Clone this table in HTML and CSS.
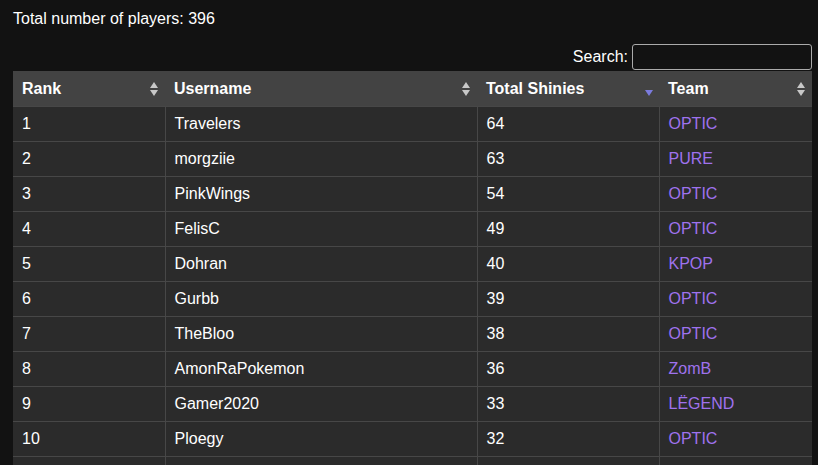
FILE: index.html
```html
<!DOCTYPE html>
<html>
<head>
<meta charset="utf-8">
<link rel="stylesheet" href="styles.css">
</head>
<body>
<div class="wrap">
  <p class="total">Total number of players: 396</p>
  <div class="filter">
    <label class="filter-label">Search:</label>
    <input class="filter-input" type="search">
  </div>
  <table class="board">
    <colgroup>
      <col class="c-rank">
      <col class="c-user">
      <col class="c-shiny">
      <col class="c-team">
    </colgroup>
    <thead>
      <tr>
        <th>Rank<span class="sort both"></span></th>
        <th>Username<span class="sort both"></span></th>
        <th>Total Shinies<span class="sort desc"></span></th>
        <th>Team<span class="sort both"></span></th>
      </tr>
    </thead>
    <tbody>
      <tr><td>1</td><td>Travelers</td><td>64</td><td class="team">OPTIC</td></tr>
      <tr><td>2</td><td>morgziie</td><td>63</td><td class="team">PURE</td></tr>
      <tr><td>3</td><td>PinkWings</td><td>54</td><td class="team">OPTIC</td></tr>
      <tr><td>4</td><td>FelisC</td><td>49</td><td class="team">OPTIC</td></tr>
      <tr><td>5</td><td>Dohran</td><td>40</td><td class="team">KPOP</td></tr>
      <tr><td>6</td><td>Gurbb</td><td>39</td><td class="team">OPTIC</td></tr>
      <tr><td>7</td><td>TheBloo</td><td>38</td><td class="team">OPTIC</td></tr>
      <tr><td>8</td><td>AmonRaPokemon</td><td>36</td><td class="team">ZomB</td></tr>
      <tr><td>9</td><td>Gamer2020</td><td>33</td><td class="team">LËGEND</td></tr>
      <tr><td>10</td><td>Ploegy</td><td>32</td><td class="team">OPTIC</td></tr>
    </tbody>
  </table>
  <div class="more"><span></span><span></span><span></span><span></span></div>
</div>
</body>
</html>
```
FILE: styles.css
```css
html, body {
  margin: 0;
  padding: 0;
  background: #121212;
  color: #ffffff;
  font-family: "Liberation Sans", Arial, sans-serif;
  font-size: 16px;
  overflow: hidden;
}
.wrap {
  padding: 10px 6px 0 13px;
}
.total {
  margin: 0;
  line-height: 18px;
}
.filter {
  display: flex;
  justify-content: flex-end;
  align-items: center;
  gap: 4px;
  margin-top: 16px;
  height: 26px;
}
.filter-label {
  line-height: 18px;
}
.filter-input {
  box-sizing: border-box;
  width: 180px;
  height: 26px;
  margin: 0;
  background: #121212;
  border: 1px solid #aaaaaa;
  border-radius: 3px;
  color: #fff;
  padding: 2px 4px;
  outline: none;
}
.board {
  width: 799px;
  border-collapse: collapse;
  table-layout: fixed;
  margin-top: 1px;
  background: #2b2b2b;
}
.c-rank { width: 152px; }
.c-user { width: 312px; }
.c-shiny { width: 182px; }
.c-team { width: 153px; }
.board th {
  box-sizing: border-box;
  background: #434343;
  text-align: left;
  font-weight: bold;
  line-height: 18px;
  padding: 9px 18px 8px 9px;
  position: relative;
}
.board td {
  line-height: 18px;
  padding: 8px 9px;
  border-top: 1px solid #474747;
  border-left: 1px solid #474747;
}
.board td:first-child {
  border-left: none;
}
.team {
  color: #9f72ee;
}
.more {
  display: grid;
  grid-template-columns: 152px 312px 182px 153px;
  height: 30px;
  width: 799px;
  background: #2b2b2b;
  border-top: 1px solid #474747;
}
.more span + span {
  border-left: 1px solid #474747;
}
.sort {
  position: absolute;
  right: 7px;
  top: 50%;
  width: 8px;
  height: 14px;
  margin-top: -7px;
}
.sort.both::before,
.sort.both::after {
  content: "";
  position: absolute;
  left: 0;
  border-left: 4px solid transparent;
  border-right: 4px solid transparent;
}
.sort.both::before {
  top: 0;
  border-bottom: 6px solid #c8c8c8;
}
.sort.both::after {
  bottom: 0;
  border-top: 6px solid #c8c8c8;
}
.sort.desc {
  margin-top: 1px;
  right: 6px;
}
.sort.desc::after {
  content: "";
  position: absolute;
  left: 0;
  top: 0;
  border-left: 4px solid transparent;
  border-right: 4px solid transparent;
  border-top: 6px solid #7b7bdd;
}
```
